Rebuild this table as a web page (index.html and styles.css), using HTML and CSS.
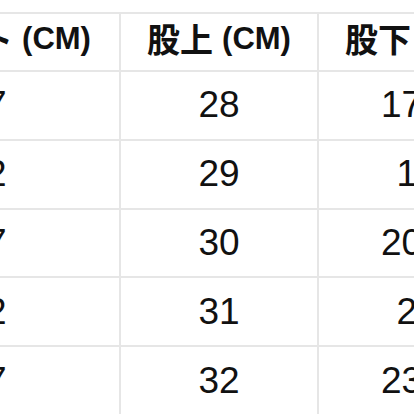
FILE: index.html
```html
<!DOCTYPE html>
<html lang="ja">
<head>
<meta charset="utf-8">
<link rel="stylesheet" href="styles.css">
</head>
<body>
<div class="viewport">
  <div class="sheet">
    <div class="cell head"><span class="jp">ウエスト</span> (CM)</div>
    <div class="cell head"><span class="jp">股上</span> (CM)</div>
    <div class="cell head"><span class="jp">股下</span> (CM)</div>

    <div class="cell">67</div><div class="cell">28</div><div class="cell">17.5</div>
    <div class="cell">72</div><div class="cell">29</div><div class="cell">19</div>
    <div class="cell">77</div><div class="cell">30</div><div class="cell">20.5</div>
    <div class="cell">82</div><div class="cell">31</div><div class="cell">22</div>
    <div class="cell">87</div><div class="cell">32</div><div class="cell">23.5</div>
  </div>
</div>
</body>
</html>
```

FILE: styles.css
```css
html, body {
  margin: 0;
  padding: 0;
  background: #ffffff;
}

.viewport {
  width: 414px;
  height: 414px;
  overflow: hidden;
  padding-top: 12px;
  box-sizing: border-box;
}

.sheet {
  display: grid;
  grid-template-columns: 266px 196px 196px;
  grid-template-rows: 56px repeat(5, 66.8px);
  gap: 2px;
  padding: 2px;
  background: #e6e6e6;
  width: max-content;
  margin-left: -149px;
}

.cell {
  background: #ffffff;
  display: flex;
  align-items: center;
  justify-content: center;
  white-space: nowrap;
  font-family: "Liberation Sans", Arial, "Noto Sans CJK JP", sans-serif;
  font-size: 37px;
  color: #111111;
}

.head {
  font-weight: bold;
  font-size: 31px;
  gap: 9px;
  padding-bottom: 7px;
  box-sizing: border-box;
}

.jp {
  font-family: "Noto Sans CJK JP", sans-serif;
  font-weight: 700;
  font-size: 33px;
  line-height: 1;
}
```
